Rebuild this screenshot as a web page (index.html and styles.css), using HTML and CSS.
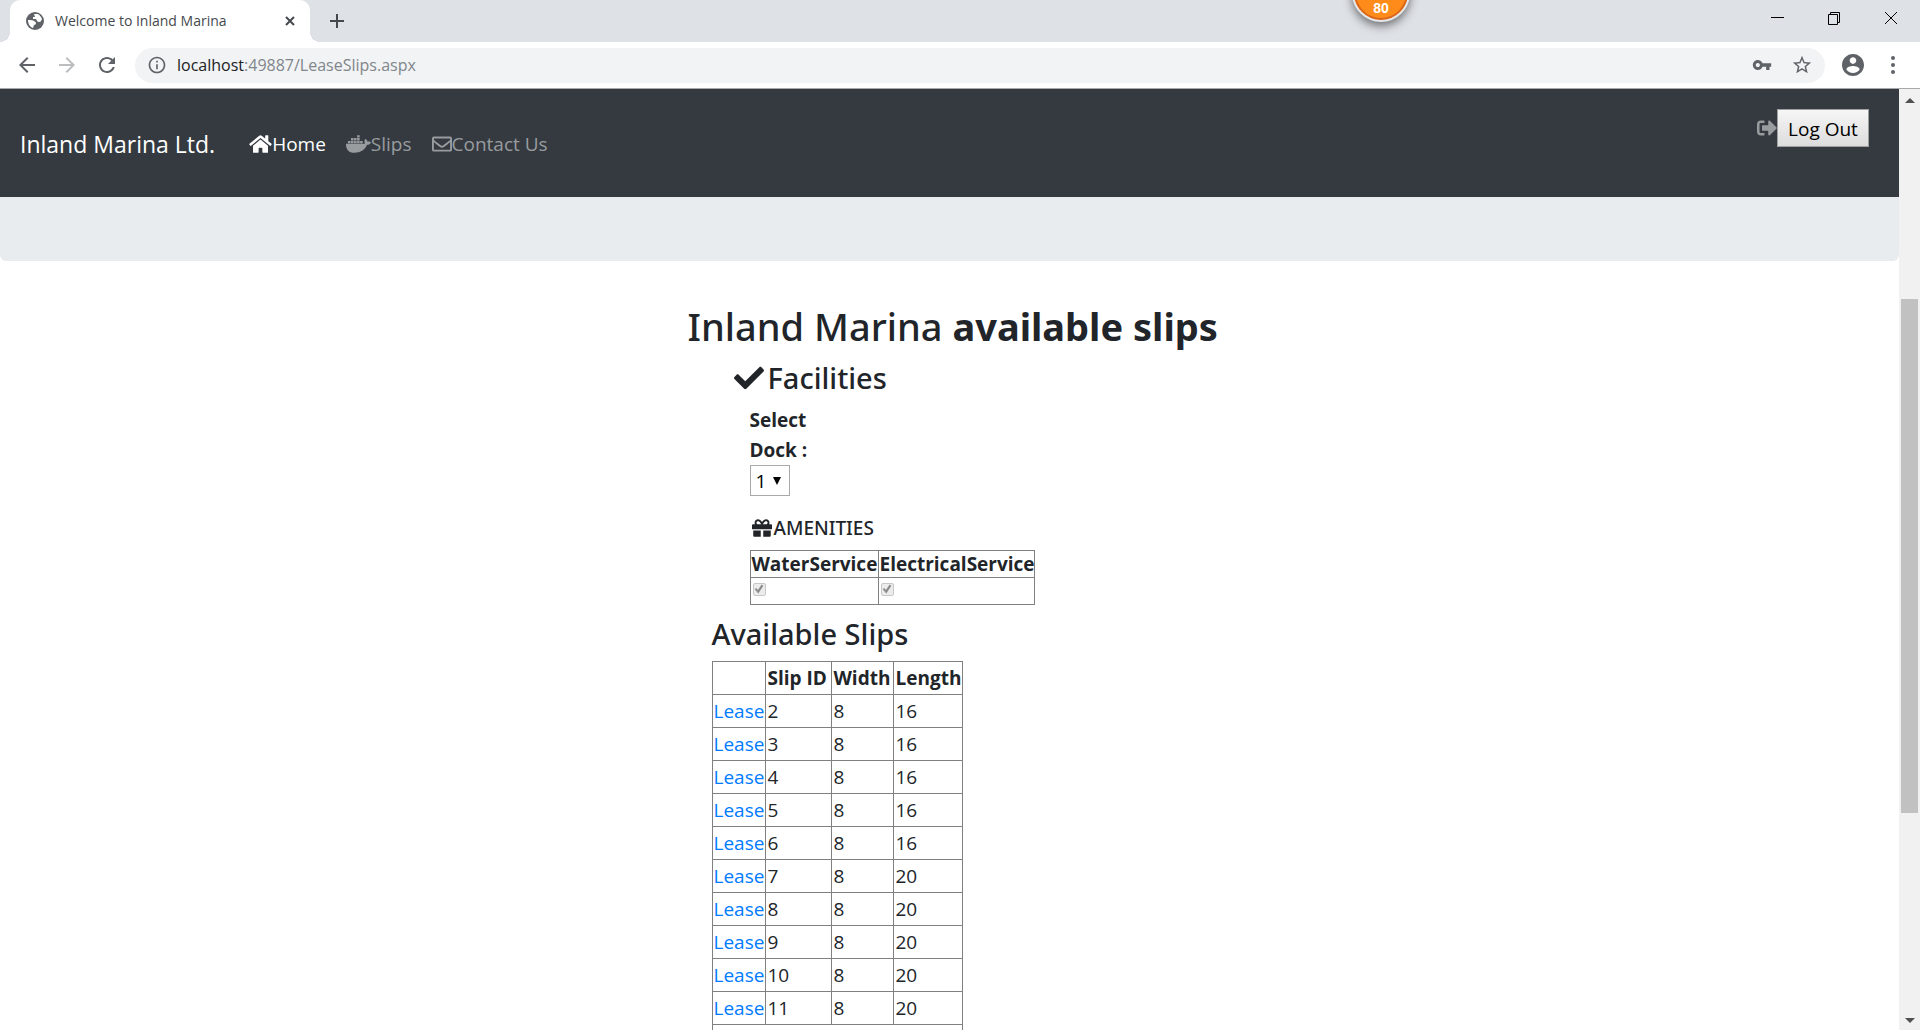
FILE: index.html
```html
<!DOCTYPE html>
<html lang="en">
<head>
<meta charset="utf-8">
<meta name="viewport" content="width=device-width, initial-scale=1">
<title>Welcome to Inland Marina</title>
<link rel="stylesheet" href="styles.css">
</head>
<body>
<div class="window">
  <div class="tabstrip">
    <div class="tab">
      <svg class="tab-icon" viewBox="0 0 20 20"><circle cx="10" cy="10" r="9"/><path class="globe-sea" d="M3 9c3 0 5 0 6 1s2 1 2 2-1 2-2 2l-1 3C5 16 3 13 3 9zM9 3h4c2 1 3 3 4 5-1 2-1 3-3 3s-2-2-3-3H8V6h2z"/></svg>
      <span class="tab-title">Welcome to Inland Marina</span>
      <button class="plain tab-close" type="button" aria-label="Close tab"><svg viewBox="0 0 12 12"><path class="line2" d="M2 2l8 8M10 2l-8 8"/></svg></button>
    </div>
    <button class="plain new-tab" type="button" aria-label="New tab"><svg viewBox="0 0 16 16"><path class="line2" d="M8 1v14M1 8h14"/></svg></button>
    <div class="window-buttons">
      <button class="plain" type="button" aria-label="Minimize"><svg viewBox="0 0 14 14"><path class="line1" d="M1 6.500h13"/></svg></button>
      <button class="plain" type="button" aria-label="Restore"><svg viewBox="0 0 14 14"><path class="line1" d="M1.500 3.500h9v10h-9zM3.500 3.500v-2h9v10h-2"/></svg></button>
      <button class="plain" type="button" aria-label="Close"><svg viewBox="0 0 14 14"><path class="line1" d="M1 1l12 12M13 1L1 13"/></svg></button>
    </div>
    <div class="badge">80</div>
  </div>

  <div class="toolbar">
    <div class="history">
      <button class="plain" type="button" aria-label="Back"><svg viewBox="0 0 24 24"><path d="M20 11H7.830l5.590-5.590L12 4l-8 8 8 8 1.410-1.410L7.830 13H20v-2z"/></svg></button>
      <button class="plain faded" type="button" aria-label="Forward"><svg viewBox="0 0 24 24"><path d="M12 4l-1.410 1.410L16.170 11H4v2h12.170l-5.580 5.590L12 20l8-8z"/></svg></button>
      <button class="plain" type="button" aria-label="Reload"><svg viewBox="0 0 24 24"><path d="M17.650 6.350C16.200 4.900 14.210 4 12 4c-4.420 0-7.990 3.580-7.990 8s3.570 8 7.990 8c3.730 0 6.840-2.550 7.730-6h-2.080c-.820 2.330-3.040 4-5.650 4-3.310 0-6-2.690-6-6s2.690-6 6-6c1.660 0 3.140.690 4.220 1.780L13 11h7V4l-2.350 2.350z"/></svg></button>
    </div>
    <div class="omnibox">
      <svg class="site-info" viewBox="0 0 24 24"><path d="M11 17h2v-6h-2v6zm1-15C6.480 2 2 6.480 2 12s4.480 10 10 10 10-4.480 10-10S17.520 2 12 2zm0 18c-4.410 0-8-3.590-8-8s3.590-8 8-8 8 3.590 8 8-3.590 8-8 8zM11 9h2V7h-2v2z"/></svg>
      <span class="url"><span class="host">localhost</span>:49887/LeaseSlips.aspx</span>
      <button class="plain" type="button" aria-label="Saved passwords"><svg viewBox="0 0 24 24"><path d="M12.650 10C11.830 7.670 9.610 6 7 6c-3.310 0-6 2.690-6 6s2.690 6 6 6c2.610 0 4.830-1.670 5.650-4H17v4h4v-4h2v-4H12.650zM7 14.500c-1.380 0-2.500-1.120-2.500-2.500s1.120-2.500 2.500-2.500 2.500 1.120 2.500 2.500-1.120 2.500-2.500 2.500z"/></svg></button>
      <button class="plain star" type="button" aria-label="Bookmark"><svg viewBox="0 0 24 24"><path d="M22 9.240l-7.190-.620L12 2 9.190 8.630 2 9.240l5.460 4.730L5.820 21 12 17.270 18.180 21l-1.630-7.030L22 9.240zM12 15.400l-3.760 2.270 1-4.280-3.320-2.880 4.380-.380L12 6.100l1.710 4.040 4.380.380-3.320 2.880 1 4.280L12 15.400z"/></svg></button>
    </div>
    <div class="profile">
      <button class="plain avatar" type="button" aria-label="Profile"><svg viewBox="2 2 20 20"><path d="M12 2C6.480 2 2 6.480 2 12s4.480 10 10 10 10-4.480 10-10S17.520 2 12 2zm0 3c1.660 0 3 1.340 3 3s-1.340 3-3 3-3-1.340-3-3 1.340-3 3-3zm0 14.200c-2.500 0-4.710-1.280-6-3.220.030-1.990 4-3.080 6-3.080 1.990 0 5.970 1.090 6 3.080-1.290 1.940-3.500 3.220-6 3.220z"/></svg></button>
      <button class="plain" type="button" aria-label="Menu"><svg viewBox="0 0 24 24"><circle cx="12" cy="5" r="2"/><circle cx="12" cy="12" r="2"/><circle cx="12" cy="19" r="2"/></svg></button>
    </div>
  </div>

  <div class="viewport">
    <div class="page">
      <nav class="navbar">
        <a class="brand" href="#">Inland Marina Ltd.</a>
        <div class="nav-links">
          <a class="nav-link active" href="#"><svg class="icon-home" viewBox="0 0 576 512"><path d="M280.370 148.260L96 300.110V464a16 16 0 0 0 16 16l112.060-.290a16 16 0 0 0 15.920-16V368a16 16 0 0 1 16-16h64a16 16 0 0 1 16 16v95.640a16 16 0 0 0 16 16.050L464 480a16 16 0 0 0 16-16V300L295.670 148.260a12.190 12.190 0 0 0-15.300 0zM571.600 251.470L488 182.560V44.050a12 12 0 0 0-12-12h-56a12 12 0 0 0-12 12v72.610L318.470 43a48 48 0 0 0-61 0L4.340 251.470a12 12 0 0 0-1.600 16.900l25.500 31A12 12 0 0 0 45.150 301l235.220-193.740a12.190 12.190 0 0 1 15.300 0L530.900 301a12 12 0 0 0 16.900-1.600l25.500-31a12 12 0 0 0-1.700-16.930z"/></svg>Home</a>
          <a class="nav-link" href="#"><svg class="icon-docker" viewBox="0 0 640 512"><path d="M349.900 236.300h-66.100v-59.400h66.100v59.400zm0-204.300h-66.100v60.700h66.100V32zm78.200 144.800H362v59.400h66.100v-59.400zm-156.300-72.100h-66.100v60.100h66.100v-60.100zm78.100 0h-66.100v60.100h66.100v-60.100zm276.800 100c-14.400-9.700-47.600-13.200-73.100-8.400-3.300-24-16.700-44.900-41.100-63.700l-14-9.300-9.300 14c-18.400 27.800-23.400 73.600-3.700 103.800-8.700 4.700-25.800 11.100-48.400 10.700H2.400c-8.700 50.800 5.800 116.800 44 162.100 37.100 43.900 92.700 66.200 165.400 66.200 157.400 0 273.900-72.500 328.400-204.200 21.400.4 67.600.1 91.300-45.200 1.500-2.500 6.600-13.200 8.500-17.100l-13.300-8.900zm-511.100-27.900h-66v59.400h66.100v-59.400zm78.100 0h-66.100v59.400h66.100v-59.400zm78.100 0h-66.100v59.400h66.100v-59.400zm-78.100-72.100h-66.100v60.100h66.100v-60.100z"/></svg>Slips</a>
          <a class="nav-link" href="#"><svg class="icon-square" viewBox="0 0 512 512"><path d="M48 64h416a48 48 0 0 1 48 48v288a48 48 0 0 1-48 48H48a48 48 0 0 1-48-48V112a48 48 0 0 1 48-48zm0 48v41c22 18 58 47 134 106 17 13 50 45 74 45s57-32 74-45c76-59 112-88 134-106v-41H48zm0 288h416V214c-23 18-55 44-105 83-23 18-61 55-103 55s-80-37-103-55c-50-39-82-65-105-83v186z"/></svg>Contact Us</a>
        </div>
        <div class="logout">
          <svg class="icon-square" viewBox="0 0 512 512"><path d="M497 273L329 441c-15 15-41 4.500-41-17v-96H152c-13.300 0-24-10.700-24-24v-96c0-13.300 10.700-24 24-24h136V88c0-21.400 25.900-32 41-17l168 168c9.300 9.400 9.300 24.600 0 34zM192 436v-40c0-6.600-5.400-12-12-12H96c-17.700 0-32-14.300-32-32V160c0-17.700 14.300-32 32-32h84c6.600 0 12-5.400 12-12V76c0-6.600-5.400-12-12-12H96c-53 0-96 43-96 96v192c0 53 43 96 96 96h84c6.600 0 12-5.400 12-12z"/></svg><button class="logout-button" type="button">Log Out</button>
        </div>
      </nav>
      <div class="jumbotron"></div>

      <main class="content">
        <h2 class="page-title">Inland Marina <b>available slips</b></h2>
        <section class="facilities">
          <h3 class="section-title"><svg class="icon-check" viewBox="0 0 512 512"><path d="M173.898 439.404l-166.400-166.400c-9.997-9.997-9.997-26.206 0-36.204l36.203-36.204c9.997-9.998 26.207-9.998 36.204 0L192 312.690 432.095 72.596c9.997-9.997 26.207-9.997 36.204 0l36.203 36.204c9.997 9.997 9.997 26.206 0 36.204l-294.400 294.401c-9.998 9.997-26.207 9.997-36.204-.001z"/></svg>Facilities</h3>
          <div class="facility-fields">
            <label class="dock-label" for="dock">Select Dock :</label>
            <div class="dock-select">
              <select id="dock"><option>1</option><option>2</option><option>3</option></select>
              <svg class="caret" viewBox="0 0 8 8"><path d="M0 0h8L4 8z"/></svg>
            </div>
            <h4 class="amenities-title"><svg class="icon-square" viewBox="0 0 512 512"><path d="M32 448c0 17.700 14.300 32 32 32h160V320H32v128zm256 32h160c17.700 0 32-14.300 32-32V320H288v160zm192-320h-42.100c6.200-12.100 10.100-25.500 10.100-40 0-48.500-39.500-88-88-88-41.600 0-68.500 21.300-103 68.300-34.500-47-61.400-68.300-103-68.300-48.500 0-88 39.500-88 88 0 14.500 3.800 27.900 10.100 40H32c-17.700 0-32 14.300-32 32v80c0 8.800 7.200 16 16 16h480c8.800 0 16-7.200 16-16v-80c0-17.700-14.300-32-32-32zm-326.100 0c-22.100 0-40-17.900-40-40s17.900-40 40-40c19.900 0 34.600 3.300 86.100 80h-86.100zm206.100 0h-86.100c51.400-76.500 65.700-80 86.100-80 22.100 0 40 17.900 40 40s-17.900 40-40 40z"/></svg>AMENITIES</h4>
            <table class="grid amenities">
              <colgroup><col class="col-water"><col class="col-electric"></colgroup>
              <thead><tr><th>WaterService</th><th>ElectricalService</th></tr></thead>
              <tbody><tr>
                <td><input type="checkbox" aria-label="Water service" checked disabled></td>
                <td><input type="checkbox" aria-label="Electrical service" checked disabled></td>
              </tr></tbody>
            </table>
          </div>
        </section>
        <section class="slips">
          <h3 class="section-title">Available Slips</h3>
          <table class="grid slip-table">
            <colgroup><col class="col-action"><col class="col-id"><col class="col-width"><col class="col-length"></colgroup>
            <thead><tr><th></th><th>Slip ID</th><th>Width</th><th>Length</th></tr></thead>
            <tbody>
              <tr><td class="action"><a href="#">Lease</a></td><td>2</td><td>8</td><td>16</td></tr>
              <tr><td class="action"><a href="#">Lease</a></td><td>3</td><td>8</td><td>16</td></tr>
              <tr><td class="action"><a href="#">Lease</a></td><td>4</td><td>8</td><td>16</td></tr>
              <tr><td class="action"><a href="#">Lease</a></td><td>5</td><td>8</td><td>16</td></tr>
              <tr><td class="action"><a href="#">Lease</a></td><td>6</td><td>8</td><td>16</td></tr>
              <tr><td class="action"><a href="#">Lease</a></td><td>7</td><td>8</td><td>20</td></tr>
              <tr><td class="action"><a href="#">Lease</a></td><td>8</td><td>8</td><td>20</td></tr>
              <tr><td class="action"><a href="#">Lease</a></td><td>9</td><td>8</td><td>20</td></tr>
              <tr><td class="action"><a href="#">Lease</a></td><td>10</td><td>8</td><td>20</td></tr>
              <tr><td class="action"><a href="#">Lease</a></td><td>11</td><td>8</td><td>20</td></tr>
              <tr><td colspan="4"></td></tr>
            </tbody>
          </table>
        </section>
      </main>
    </div>
    <div class="scrollbar">
      <svg class="scroll-arrow" viewBox="0 0 10 5"><path d="M5 0l5 5H0z"/></svg>
      <div class="scroll-track"><div class="scroll-thumb"></div></div>
      <svg class="scroll-arrow" viewBox="0 0 10 5"><path d="M0 0h10L5 5z"/></svg>
    </div>
  </div>
</div>
</body>
</html>
```
FILE: styles.css
```css
* { box-sizing: border-box; }

body {
  margin: 0;
  background: #fff;
  color: #212529;
  font: 19px/30px "Segoe UI", "Open Sans", "Noto Sans", sans-serif;
}

svg { display: block; flex: none; fill: currentColor; }
a { text-decoration: none; }

.window {
  display: flex;
  flex-direction: column;
  height: 100vh;
  overflow: hidden;
}

.plain {
  display: flex;
  align-items: center;
  justify-content: center;
  margin: 0;
  padding: 0;
  border: 0;
  background: none;
  color: inherit;
}

.line1, .line2 { fill: none; stroke: currentColor; }
.line2 { stroke-width: 2; }

/* Tab strip */
.tabstrip {
  position: relative;
  display: flex;
  flex: none;
  height: 42px;
  padding-left: 10px;
  background: #dee1e6;
  color: #45494d;
}

.tab {
  position: relative;
  display: flex;
  align-items: center;
  width: 300px;
  padding: 0 14px 0 15px;
  border-radius: 10px 10px 0 0;
  background: #fff;
}

.tab::before, .tab::after {
  content: "";
  position: absolute;
  bottom: 0;
  width: 10px;
  height: 10px;
}
.tab::before { right: 100%; background: radial-gradient(circle at 0 0, transparent 10px, #fff 10px); }
.tab::after { left: 100%; background: radial-gradient(circle at 100% 0, transparent 10px, #fff 10px); }

.tab-icon { width: 20px; height: 20px; margin-right: 10px; color: #5f6368; }
.globe-sea { fill: #fff; }
.tab-title { flex: 1; font-size: 14px; line-height: 20px; white-space: nowrap; }
.tab-close svg { width: 12px; height: 12px; }
.new-tab { width: 54px; }
.new-tab svg { width: 16px; height: 16px; }

.window-buttons { display: flex; margin-left: auto; padding: 0 1px 6px 0; color: #000; }
.window-buttons .plain { width: 57px; }
.window-buttons svg { width: 14px; height: 14px; }

.badge {
  position: absolute;
  z-index: 1;
  top: -36px;
  right: 510px;
  width: 58px;
  height: 58px;
  padding-top: 33px;
  border: 2px solid #e4e6ea;
  border-radius: 50%;
  background: #ff8c1a;
  box-shadow: inset 0 0 0 2px #d9661a, 0 4px 10px rgba(0, 0, 0, 0.5);
  color: #fff;
  font: bold 14px/18px "Liberation Sans", Arial, sans-serif;
  text-align: center;
}

/* Toolbar */
.toolbar {
  display: flex;
  flex: none;
  align-items: center;
  height: 47px;
  padding: 0 7px;
  border-bottom: 1px solid #a9a9ab;
  color: #5f6368;
}
.toolbar .plain { width: 40px; }
.toolbar .plain svg { width: 24px; height: 24px; }
.history { display: flex; padding-right: 8px; }
.history .faded { color: #bbbdbf; }

.omnibox {
  display: flex;
  flex: 1;
  align-items: center;
  height: 35px;
  padding: 0 3px 0 12px;
  border-radius: 18px;
  background: #f1f3f4;
}
.omnibox .plain svg { width: 20px; height: 20px; }
.omnibox .star svg { width: 22px; height: 22px; }
.site-info { width: 20px; height: 20px; margin-right: 10px; }
.url { flex: 1; color: #80868b; font-size: 16px; line-height: 24px; }
.host { color: #202124; }

.profile { display: flex; padding-left: 8px; }
.profile .avatar svg { width: 22px; height: 22px; }

/* Page area */
.viewport { display: flex; flex: 1; min-height: 0; }
.page { flex: 1; min-width: 0; overflow: hidden; }

.scrollbar {
  display: flex;
  flex: none;
  flex-direction: column;
  align-items: center;
  width: 21px;
  padding: 9px 0 7px;
  background: #f1f1f1;
  color: #505050;
}
.scroll-arrow { width: 10px; height: 5px; }
.scroll-track { display: flex; flex: 1; flex-direction: column; width: 17px; }
.scroll-track::before { content: ""; flex: 196; }
.scroll-thumb { flex: 514; background: #c1c1c1; }
.scroll-track::after { content: ""; flex: 205; }

.navbar {
  display: flex;
  align-items: center;
  height: 108px;
  padding: 12px 30px 10px 20px;
  background: #343a40;
}
.brand { margin-right: 34px; color: #fff; font-size: 23px; line-height: 38px; }
.nav-links { display: flex; gap: 20px; }
.nav-link { display: flex; align-items: center; color: #999c9f; }
.nav-link.active { color: #fff; }
.icon-home { width: 23px; height: 20px; }
.icon-docker { width: 25px; height: 20px; }
.icon-square { width: 20px; height: 20px; }
.icon-check { width: 30px; height: 30px; }

.logout {
  display: flex;
  align-items: center;
  align-self: flex-start;
  margin-left: auto;
  padding-top: 8px;
  color: #999c9f;
}
.logout-button {
  width: 92px;
  height: 38px;
  padding: 2px 0 0;
  border: 1px solid #a0a0a0;
  background: linear-gradient(#f6f6f6, #dcdcdc);
  color: #000;
  font: inherit;
}

.jumbotron {
  height: 64px;
  margin-bottom: 41px;
  border-radius: 0 0 6px 6px;
  background: #e9ecef;
}

/* Slips page */
.content { width: 524px; margin: 0 auto; }

.page-title, .section-title, .amenities-title {
  font-family: "Segoe UI", "Noto Sans", "Open Sans", sans-serif;
  font-weight: 500;
}
.page-title {
  margin: 0 0 10px;
  font-size: 38px;
  line-height: 48px;
  white-space: nowrap;
}
.section-title {
  display: flex;
  align-items: center;
  margin: 0 0 9px;
  font-size: 29px;
  line-height: 36px;
}
.facilities { padding-left: 46px; }
.facilities .section-title { gap: 4px; }
.facility-fields { padding-left: 16px; }
.dock-label { display: block; width: 80px; font-weight: 700; }

.dock-select { display: grid; width: 40px; margin: 0 0 17px; }
.dock-select > * { grid-area: 1 / 1; }
.dock-select select {
  width: 100%;
  height: 31px;
  padding: 0 5px;
  border: 1px solid #a9a9a9;
  border-radius: 0;
  background: #fff;
  color: #000;
  font: inherit;
  appearance: none;
}
.caret {
  align-self: center;
  justify-self: end;
  width: 8px;
  height: 8px;
  margin-right: 9px;
  color: #000;
  pointer-events: none;
}

.amenities-title {
  display: flex;
  align-items: center;
  gap: 2px;
  margin: 0 0 7px;
  padding-left: 2px;
  font-size: 19px;
  line-height: 30px;
}

.grid { border-collapse: collapse; table-layout: fixed; }
.grid th, .grid td {
  padding: 1px;
  border: 1px solid #808080;
  text-align: left;
  white-space: nowrap;
}
.grid a { color: #007bff; }

.amenities { width: 285px; margin-bottom: 11px; }
.amenities th, .amenities td { height: 27px; line-height: 24px; }
.col-water { width: 128px; }
.col-electric { width: 156px; }
.amenities input {
  display: block;
  width: 13px;
  height: 13px;
  margin: 0 0 4px 1px;
  border: 1px solid #c8c8c8;
  border-radius: 2px;
  background: #ececec;
  appearance: none;
}
.amenities input::before {
  content: "";
  display: block;
  width: 11px;
  height: 11px;
  background: #8c8c8c;
  clip-path: polygon(10% 52%, 26% 42%, 40% 60%, 74% 10%, 90% 20%, 44% 92%);
}

.slips { padding-left: 24px; }
.slip-table { width: 251px; }
.slip-table th, .slip-table td { height: 33px; padding-left: 2px; line-height: 30px; }
.slip-table .action { padding-left: 1px; text-align: center; }
.col-action { width: 53px; }
.col-id { width: 66px; }
.col-width { width: 62px; }
.col-length { width: 69px; }
```
